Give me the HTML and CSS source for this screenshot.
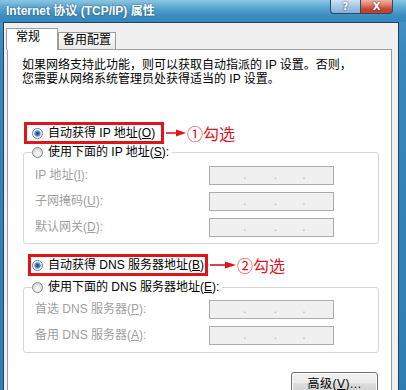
FILE: index.html
```html
<!DOCTYPE html>
<html lang="zh-CN">
<head>
<meta charset="utf-8">
<title>Internet 协议 (TCP/IP) 属性</title>
<link rel="stylesheet" href="styles.css">
</head>
<body>
<div class="window">
  <div class="titlebar">
    <span class="title">Internet 协议 <span class="lat">(TCP/IP)</span> 属性</span>
    <div class="caption">
      <span class="cap-btn help">?</span>
      <span class="cap-btn close">X</span>
    </div>
  </div>
  <div class="client">
    <div class="tabs">
      <div class="tab active">常规</div>
      <div class="tab">备用配置</div>
    </div>
    <div class="panel">
      <div class="intro">
        <span class="line">如果网络支持此功能，则可以获取自动指派的 IP 设置。否则，</span>
        <span class="line">您需要从网络系统管理员处获得适当的 IP 设置。</span>
      </div>

      <div class="mark mark-ip">
        <div class="redbox box-ip">
          <span class="radio"><span class="dot checked"></span><span>自动获得 IP 地址<span class="lat">(<u>O</u>)</span></span></span>
        </div>
        <svg class="arrow" width="20" height="10" viewBox="0 0 20 10"><line x1="0" y1="5" x2="11" y2="5" stroke="#e0141b" stroke-width="1.6"/><polygon points="10,1.5 20,5 10,8.5" fill="#e0141b"/></svg>
        <span class="note">①勾选</span>
      </div>

      <fieldset class="group group-ip">
        <legend><span class="radio"><span class="dot"></span><span>使用下面的 IP 地址<span class="lat">(<u>S</u>):</span></span></span></legend>
        <div class="rows">
          <span class="lbl">IP 地址<span class="lat">(<u>I</u>):</span></span>
          <span class="ipbox"><span>.</span><span>.</span><span>.</span></span>
          <span class="lbl">子网掩码<span class="lat">(<u>U</u>):</span></span>
          <span class="ipbox"><span>.</span><span>.</span><span>.</span></span>
          <span class="lbl">默认网关<span class="lat">(<u>D</u>):</span></span>
          <span class="ipbox"><span>.</span><span>.</span><span>.</span></span>
        </div>
      </fieldset>

      <div class="mark mark-dns">
        <div class="redbox box-dns">
          <span class="radio"><span class="dot checked"></span><span>自动获得 DNS 服务器地址<span class="lat">(<u>B</u>)</span></span></span>
        </div>
        <svg class="arrow" width="26" height="10" viewBox="0 0 26 10"><line x1="0" y1="5" x2="16" y2="5" stroke="#e0141b" stroke-width="1.6"/><polygon points="15,1.5 26,5 15,8.5" fill="#e0141b"/></svg>
        <span class="note">②勾选</span>
      </div>

      <fieldset class="group group-dns">
        <legend><span class="radio"><span class="dot"></span><span>使用下面的 DNS 服务器地址<span class="lat">(<u>E</u>):</span></span></span></legend>
        <div class="rows">
          <span class="lbl">首选 DNS 服务器<span class="lat">(<u>P</u>):</span></span>
          <span class="ipbox"><span>.</span><span>.</span><span>.</span></span>
          <span class="lbl">备用 DNS 服务器<span class="lat">(<u>A</u>):</span></span>
          <span class="ipbox"><span>.</span><span>.</span><span>.</span></span>
        </div>
      </fieldset>

      <div class="actions">
        <button class="btn" type="button">高级<span class="lat">(<u>V</u>)...</span></button>
      </div>
    </div>
  </div>
</div>
</body>
</html>
```

FILE: styles.css
```css
html, body {
  margin: 0;
  padding: 0;
}
body {
  width: 406px;
  height: 390px;
  overflow: hidden;
  font-family: "Liberation Sans", "Noto Sans CJK SC", sans-serif;
  font-size: 12px;
  color: #000;
  background: #fff;
}
.lat {
  font-family: "Liberation Sans", sans-serif;
}

.window {
  height: 390px;
  display: flex;
  flex-direction: column;
  background: linear-gradient(to bottom, #4a96c8 0, #3986bd 60px, #2f7db3 100%);
}

.titlebar {
  height: 22px;
  flex: none;
  display: flex;
  justify-content: space-between;
  align-items: flex-start;
  background: linear-gradient(to bottom, #8cc6e2 0, #5aa6d0 35%, #3c8dc0 70%, #3587bb 100%);
}
.title {
  margin: 3px 0 0 6px;
  color: #fff;
  font-family: "Liberation Sans", "Noto Sans CJK SC", sans-serif;
  font-weight: bold;
  font-size: 12px;
  line-height: 16px;
  text-shadow: 0 0 2px rgba(10, 40, 80, 0.7);
}
.caption {
  display: flex;
  margin-right: 13px;
}
.cap-btn {
  height: 14px;
  box-sizing: border-box;
  display: flex;
  align-items: center;
  justify-content: center;
  border: 1px solid #2a4a69;
  border-top: none;
  color: #fff;
  font-family: "DejaVu Sans", sans-serif;
  font-weight: bold;
  font-size: 10px;
  line-height: 1;
  text-shadow: 0 0 2px #223;
}
.help {
  width: 30px;
  border-right: none;
  border-radius: 0 0 0 4px;
  background: linear-gradient(to bottom, #cfe3f3 0, #a9c9e6 45%, #84afd6 100%);
}
.close {
  width: 33px;
  border-radius: 0 0 4px 0;
  background: linear-gradient(to bottom, #f0b4a6 0, #df7a66 40%, #c8432e 70%, #c0412c 100%);
}

.client {
  flex: 1;
  min-height: 0;
  margin: 0 7px 0 3px;
  border: 1px solid #24425d;
  border-bottom: none;
  background: #f0f0f0;
  padding: 5px 6px 0 3px;
  display: flex;
  flex-direction: column;
}

.tabs {
  display: flex;
  align-items: flex-end;
  height: 22px;
  margin-bottom: -1px;
  position: relative;
  z-index: 1;
}
.tab {
  box-sizing: border-box;
  height: 17px;
  width: 58px;
  margin-bottom: 1px;
  border: 1px solid #9c9c9c;
  border-bottom: none;
  background: linear-gradient(to bottom, #fbfbfb, #e9e9e9);
  text-align: center;
  line-height: 15px;
  font-size: 12px;
}
.tab.active {
  height: 22px;
  width: 52px;
  margin-bottom: 0;
  margin-left: -1px;
  background: #fff;
  line-height: 17px;
  text-align: left;
  padding-left: 9px;
}

.panel {
  flex: 1;
  border: 1px solid #9c9c9c;
  border-bottom: none;
  background: #fff;
}

.intro {
  margin: 8px 0 0 14px;
  display: flex;
  flex-direction: column;
}
.intro .line {
  display: block;
  height: 14px;
  line-height: 14px;
  white-space: nowrap;
}

.mark {
  display: flex;
  align-items: center;
  height: 22px;
}
.mark-ip {
  margin: 36px 0 0 16px;
}
.mark-dns {
  margin: 10px 0 0 20px;
}
.redbox {
  box-sizing: border-box;
  height: 22px;
  border: 3px solid #e0141b;
  display: flex;
  align-items: center;
}
.box-ip {
  width: 140px;
  padding-left: 5px;
}
.box-dns {
  width: 180px;
  padding-left: 1px;
}
.arrow {
  flex: none;
  margin-left: 2px;
}
.note {
  margin-left: 1px;
  color: #e0141b;
  font-family: "Noto Sans CJK SC", sans-serif;
  font-size: 16px;
  line-height: 20px;
}

.radio {
  display: flex;
  align-items: center;
  gap: 5px;
  line-height: 16px;
  white-space: nowrap;
}
.dot {
  flex: none;
  width: 11px;
  height: 11px;
  box-sizing: border-box;
  border-radius: 50%;
  border: 1px solid #8b8b8b;
  background: radial-gradient(circle at 50% 65%, #ffffff 0, #f2f2f2 2px, #d6d6d6 5px);
}
.dot.checked {
  border-color: #6d7f91;
  background: radial-gradient(circle at 50% 50%, #173f73 0, #2f6fb2 1.6px, #6ea3d6 2.8px, #d6e7f6 3.6px, #ffffff 4.2px);
}

.group {
  box-sizing: border-box;
  width: 356px;
  margin: 0 0 0 15px;
  border: 1px solid #d6d6d6;
  border-radius: 3px;
  padding: 6px 0 6px 11px;
  min-inline-size: 0;
}
.group-dns {
  margin-top: 3px;
  padding-top: 5px;
  padding-bottom: 7px;
}
.group legend {
  padding: 0 3px 0 0;
  margin-left: -3px;
  height: 16px;
}

.rows {
  display: grid;
  grid-template-columns: 174px 125px;
  row-gap: 7px;
  align-items: center;
}
.lbl {
  color: #a0a0a0;
  line-height: 19px;
  white-space: nowrap;
}
.ipbox {
  box-sizing: border-box;
  height: 19px;
  border: 1px solid #acacac;
  background: #f0f0f0;
  display: flex;
  padding-left: 33px;
  color: #b8b8b8;
  line-height: 17px;
  font-size: 12px;
}
.ipbox span {
  width: 32px;
}
.ipbox span:nth-child(2) {
  width: 30px;
}

.actions {
  display: flex;
  justify-content: flex-end;
  margin: 19px 13px 0 0;
}
.btn {
  box-sizing: border-box;
  width: 87px;
  height: 23px;
  padding: 0 0 2px 0;
  border: 1px solid #707070;
  border-radius: 3px;
  background: linear-gradient(to bottom, #f3f3f3 0, #ebebeb 45%, #dcdcdc 50%, #cfcfcf 100%);
  box-shadow: inset 0 0 0 1px #fbfbfb;
  font-family: "Liberation Sans", "Noto Sans CJK SC", sans-serif;
  font-size: 12px;
  color: #000;
  letter-spacing: 0.5px;
}
```
